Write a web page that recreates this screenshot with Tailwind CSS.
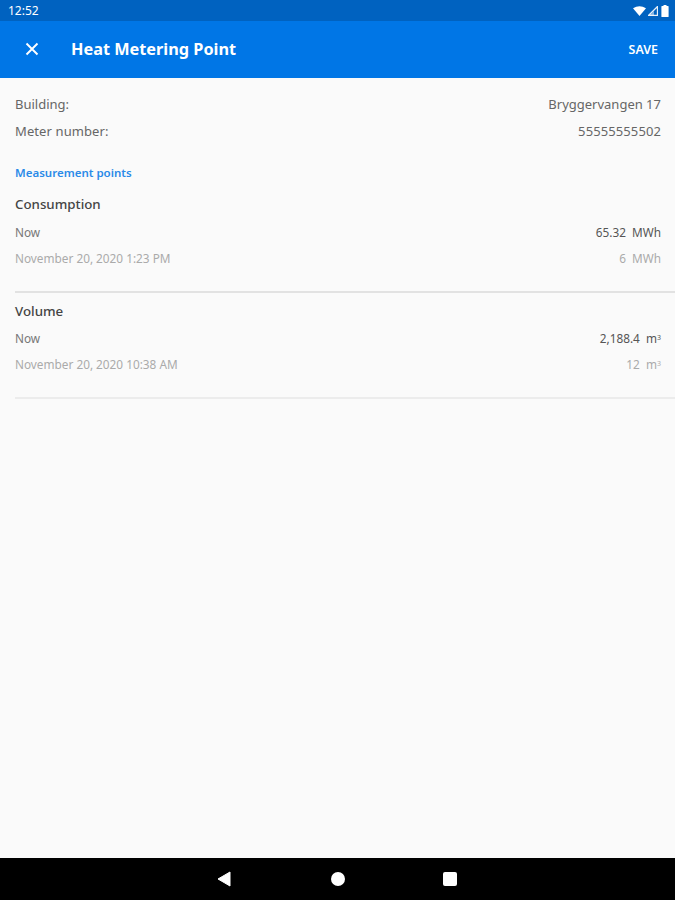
<!DOCTYPE html>
<html><head><meta charset="utf-8"><script src="https://cdn.jsdelivr.net/npm/@tailwindcss/browser@4"></script></head>
<body class="m-0">
<div class="w-[675px] h-[900px] flex flex-col overflow-hidden bg-[#fafafa] font-['Noto_Sans',sans-serif]">
  <div class="h-[21px] bg-[#0062c0] flex items-center justify-between pl-2 pr-[6px] text-white">
    <span class="text-[12px] leading-none">12:52</span>
    <div class="flex items-center gap-[2px]">
      <svg width="13" height="10" viewBox="0 0 13 10"><path d="M0 2.2 Q6.5 -1.8 13 2.2 L6.5 10Z" fill="#fff"/></svg>
      <svg width="10" height="10" viewBox="0 0 10 10"><path d="M9.5 0.5V9.5H0.5Z" fill="none" stroke="#fff" stroke-width="1.3" opacity=".9"/><path d="M6 5V9.5H1.5Z" fill="#fff" opacity=".5"/></svg>
      <svg width="8" height="12" viewBox="0 0 8 12" class="ml-[1px]"><path d="M2.5 0h3v1H7a.6.6 0 0 1 .6.6V11.4a.6.6 0 0 1-.6.6H1a.6.6 0 0 1-.6-.6V1.6A.6.6 0 0 1 1 1h1.5z" fill="#fff"/></svg>
    </div>
  </div>
  <div class="h-[57px] bg-[#0076e6] flex items-center text-white">
    <svg width="14" height="14" viewBox="0 0 14 14" class="ml-[25px] mt-[-1px]"><path d="M1.5 1.5L12.5 12.5M12.5 1.5L1.5 12.5" stroke="#fff" stroke-width="1.9" fill="none"/></svg>
    <span class="ml-[32px] text-[16.3px] font-bold leading-none">Heat Metering Point</span>
    <span class="ml-auto mr-[17px] text-[12.4px] font-semibold leading-none mt-[2px]">SAVE</span>
  </div>
  <div class="flex-1 px-[15px] flex flex-col">
    <div class="flex justify-between items-center h-[26px] mt-[14px] text-[13px] text-[#666]"><span>Building:</span><span class="mr-[-1px]">Bryggervangen 17</span></div>
    <div class="flex justify-between items-center h-[26px] mt-[1px] text-[13px] text-[#666]"><span class="tracking-[0.1px]">Meter number:</span><span class="mr-[-1px] tracking-[0.1px]">55555555502</span></div>
    <div class="mt-[20px] h-[16px] flex items-center text-[11.5px] font-semibold text-[#2a8ae8]">Measurement points</div>
    <div class="mt-[12px] h-[24px] flex items-center text-[13.3px] font-medium text-[#444]">Consumption</div>
    <div class="mt-[3px] h-[26px] flex justify-between items-center text-[11.8px] text-[#777]"><span>Now</span><span class="text-[#555] mr-[-1px]">65.32&nbsp; MWh</span></div>
    <div class="h-[26px] flex justify-between items-center text-[11.8px] text-[#aaa]"><span>November 20, 2020 1:23 PM</span><span class="mr-[-1px]">6&nbsp; MWh</span></div>
    <div class="mt-[19px] h-[2px] bg-[#e2e2e2] mr-[-15px]"></div>
    <div class="mt-[7px] h-[24px] flex items-center text-[13.3px] font-medium text-[#444]">Volume</div>
    <div class="mt-[2px] h-[26px] flex justify-between items-center text-[11.8px] text-[#777]"><span>Now</span><span class="text-[#555] mr-[-1px]">2,188.4&nbsp; m<sup class="text-[7px] leading-none">3</sup></span></div>
    <div class="h-[26px] flex justify-between items-center text-[11.8px] text-[#aaa]"><span>November 20, 2020 10:38 AM</span><span class="mr-[-1px]">12&nbsp; m<sup class="text-[7px] leading-none">3</sup></span></div>
    <div class="mt-[19px] h-[2px] bg-[#ececec] mr-[-15px]"></div>
  </div>
  <div class="h-[42px] bg-black relative flex items-center justify-center">
    <div class="flex items-center ml-[-2px]">
      <svg width="14" height="16" viewBox="0 0 14 16" class="mr-[100px]"><path d="M13 1V15L1 8Z" fill="#fff" stroke="#fff" stroke-linejoin="round"/></svg>
      <div class="w-[14px] h-[14px] rounded-full bg-white mr-[98px]"></div>
      <div class="w-[14px] h-[14px] rounded-[2px] bg-white"></div>
    </div>
  </div>
</div>
</body></html>
